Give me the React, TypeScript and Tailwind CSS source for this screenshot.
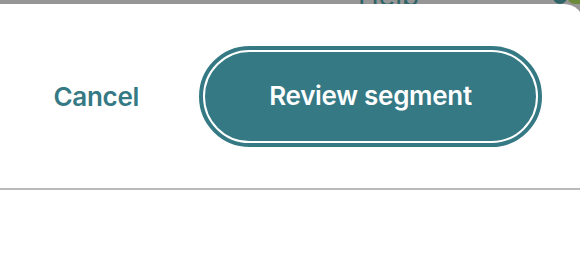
export default function App() {
  return (
    <div className="w-[580px] h-[280px] overflow-hidden bg-[#969696] font-['Inter','Liberation_Sans',sans-serif]">
      {/* dimmed page peeking out above the dialog */}
      <div className="flex h-[4px] items-end overflow-hidden">
        <div className="ml-[295px] h-full w-px bg-[#b4b4b4]" />
        <div className="ml-[63px] mb-[-6px] text-[28px] leading-none text-[#2f6468]">Help</div>
        <div className="ml-[63px] h-full w-px bg-[#b4b4b4]" />
        <div className="ml-[34px] h-full w-px bg-[#b4b4b4]" />
        <div className="ml-[37px] h-[14px] w-[14px] shrink-0 rounded-full bg-[#2f6468]" />
        <div className="h-[16px] w-[20px] shrink-0 rounded-full bg-[#6b8a3a]" />
      </div>

      {/* dialog */}
      <div className="w-[584px] h-[276px] bg-white rounded-tr-[20px]">
        <div className="flex h-[184px] items-center justify-end gap-[60px] pr-[42px]">
          <button className="text-[26px] font-semibold text-[#357985] tracking-[-0.3px]">Cancel</button>
          <button className="flex h-[101px] w-[343px] items-center justify-center rounded-full border-[4px] border-[#357985] bg-[#357985] p-0">
            <span className="flex h-full w-full items-center justify-center rounded-full border-2 border-white pb-[2px] text-[26px] font-semibold text-white tracking-[-0.3px]">
              Review segment
            </span>
          </button>
        </div>
        <div className="h-[2px] bg-[#bababa]" />
      </div>
    </div>
  );
}
